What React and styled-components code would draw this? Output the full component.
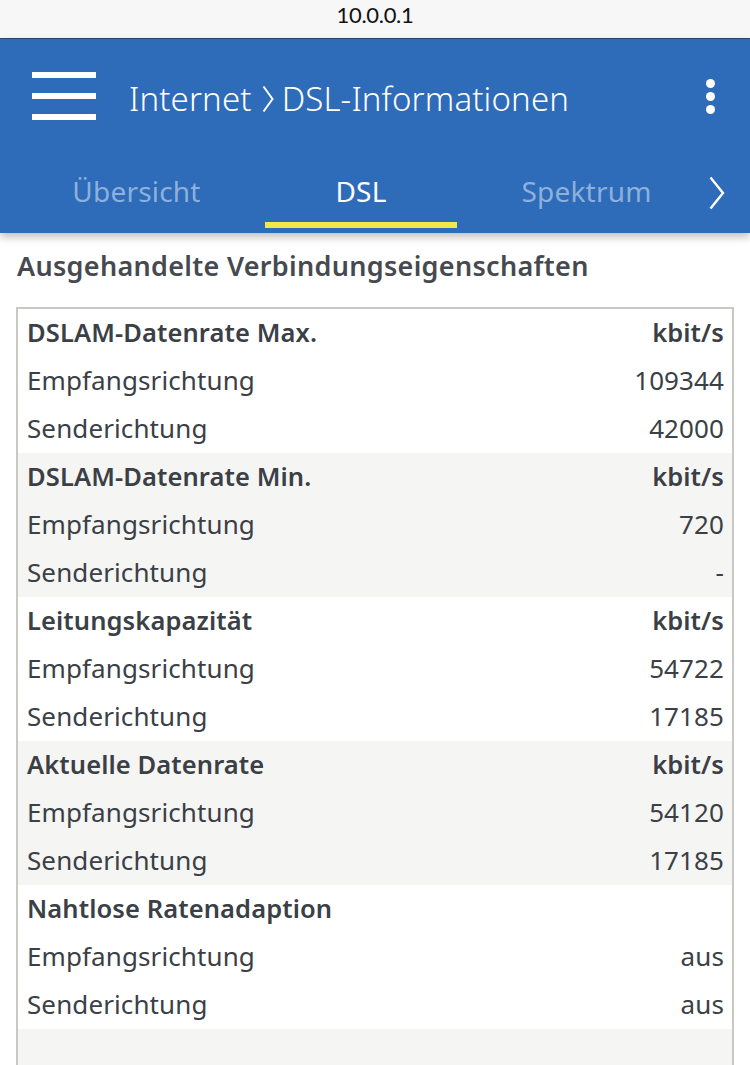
import React from "react";
import styled, { createGlobalStyle } from "styled-components";

const Global = createGlobalStyle`
  html, body { margin: 0; padding: 0; background: #fff; }
  body { font-family: "Noto Sans", sans-serif; -webkit-font-smoothing: antialiased; }
  * { box-sizing: border-box; }
`;

const Page = styled.div`
  width: 750px;
  height: 1065px;
  overflow: hidden;
  background: #fff;
`;

const StatusBar = styled.div`
  height: 39px;
  background: #f7f7f7;
  border-bottom: 1px solid #2a4a78;
  display: flex;
  justify-content: center;
  padding-top: 1px;
  font-family: Lato, sans-serif;
  font-size: 22px;
  color: #111;
  letter-spacing: -0.3px;
`;

const Header = styled.header`
  background: #2e6bb8;
  height: 194px;
  box-shadow: 0 4px 8px rgba(0, 0, 0, 0.25);
  display: flex;
  flex-direction: column;
  position: relative;
  z-index: 1;
`;

const TopRow = styled.div`
  height: 118px;
  display: flex;
  align-items: center;
  padding: 0 0 0 32px;
`;

const Burger = styled.div`
  width: 64px;
  display: flex;
  flex-direction: column;
  gap: 15px;
  margin-top: -4px;
  span {
    display: block;
    height: 6px;
    background: #fff;
  }
`;

const Title = styled.h1`
  margin: 0 0 0 33px;
  font-weight: 300;
  font-size: 33px;
  color: #fff;
  flex: 1;
  display: flex;
  align-items: center;
  letter-spacing: 0.15px;
`;

const Crumb = styled.svg`
  margin: 2px 8px 0 10px;
`;

const Kebab = styled.div`
  width: 80px;
  display: flex;
  flex-direction: column;
  align-items: center;
  gap: 4px;
  margin-top: -4px;
  span {
    width: 9px;
    height: 9px;
    border-radius: 50%;
    background: #fff;
  }
`;

const Tabs = styled.nav`
  flex: 1;
  display: flex;
  align-items: stretch;
  padding-left: 16px;
`;

const Tab = styled.div`
  width: ${p => p.$w}px;
  flex-shrink: 0;
  display: flex;
  justify-content: center;
  align-items: center;
  font-size: 28px;
  font-weight: 400;
  letter-spacing: 0.2px;
  color: ${p => (p.$active ? "#fff" : "#8db0dc")};
  position: relative;
  padding-bottom: 8px;
  &::after {
    content: "";
    position: absolute;
    left: 8px;
    right: 8px;
    bottom: 5px;
    height: 6px;
    background: ${p => (p.$active ? "#f3e74a" : "transparent")};
  }
`;

const TabArrow = styled.div`
  flex: 1;
  display: flex;
  align-items: center;
  justify-content: flex-start;
  padding: 0 0 4px 1px;
`;

const Content = styled.main`
  padding: 0 16px;
`;

const Heading = styled.h2`
  margin: 0;
  padding: 14px 0 0 1px;
  height: 74px;
  font-size: 27px;
  font-weight: 600;
  color: #464a50;
  letter-spacing: 0.3px;
`;

const Table = styled.div`
  border: 2px solid #c9c9c4;
  border-bottom: none;
  background: #f5f5f3;
  padding-bottom: 60px;
`;

const Group = styled.div`
  background: ${p => (p.$shaded ? "#f5f5f3" : "#fff")};
`;

const Row = styled.div`
  height: 48px;
  display: flex;
  align-items: center;
  justify-content: space-between;
  padding: 0 8px 2px 9px;
  font-size: ${p => (p.$head ? 25.5 : 26)}px;
  letter-spacing: 0.1px;
  color: #3b3f46;
  font-weight: ${p => (p.$head ? 600 : 400)};
`;

const groups = [
  { title: "DSLAM-Datenrate Max.", unit: "kbit/s", rx: "109344", tx: "42000" },
  { title: "DSLAM-Datenrate Min.", unit: "kbit/s", rx: "720", tx: "-" },
  { title: "Leitungskapazität", unit: "kbit/s", rx: "54722", tx: "17185" },
  { title: "Aktuelle Datenrate", unit: "kbit/s", rx: "54120", tx: "17185" },
  { title: "Nahtlose Ratenadaption", unit: "", rx: "aus", tx: "aus" },
];

export default function App() {
  return (
    <Page>
      <Global />
      <StatusBar>10.0.0.1</StatusBar>
      <Header>
        <TopRow>
          <Burger>
            <span />
            <span />
            <span />
          </Burger>
          <Title>
            Internet
            <Crumb width="12" height="28" viewBox="0 0 12 28">
              <path d="M1.5 1.5 L10.5 14 L1.5 26.5" fill="none" stroke="#fff" strokeWidth="2" />
            </Crumb>
            DSL-Informationen
          </Title>
          <Kebab>
            <span />
            <span />
            <span />
          </Kebab>
        </TopRow>
        <Tabs>
          <Tab $w={241}>Übersicht</Tab>
          <Tab $w={208} $active>DSL</Tab>
          <Tab $w={243}>Spektrum</Tab>
          <TabArrow>
            <svg width="16" height="34" viewBox="0 0 16 34">
              <path d="M1.5 1.5 L14 17 L1.5 32.5" fill="none" stroke="#fff" strokeWidth="2.4" />
            </svg>
          </TabArrow>
        </Tabs>
      </Header>
      <Content>
        <Heading>Ausgehandelte Verbindungseigenschaften</Heading>
        <Table>
          {groups.map((g, i) => (
            <Group key={g.title} $shaded={i % 2 === 1}>
              <Row $head>
                <span>{g.title}</span>
                <span>{g.unit}</span>
              </Row>
              <Row>
                <span>Empfangsrichtung</span>
                <span>{g.rx}</span>
              </Row>
              <Row>
                <span>Senderichtung</span>
                <span>{g.tx}</span>
              </Row>
            </Group>
          ))}
        </Table>
      </Content>
    </Page>
  );
}
